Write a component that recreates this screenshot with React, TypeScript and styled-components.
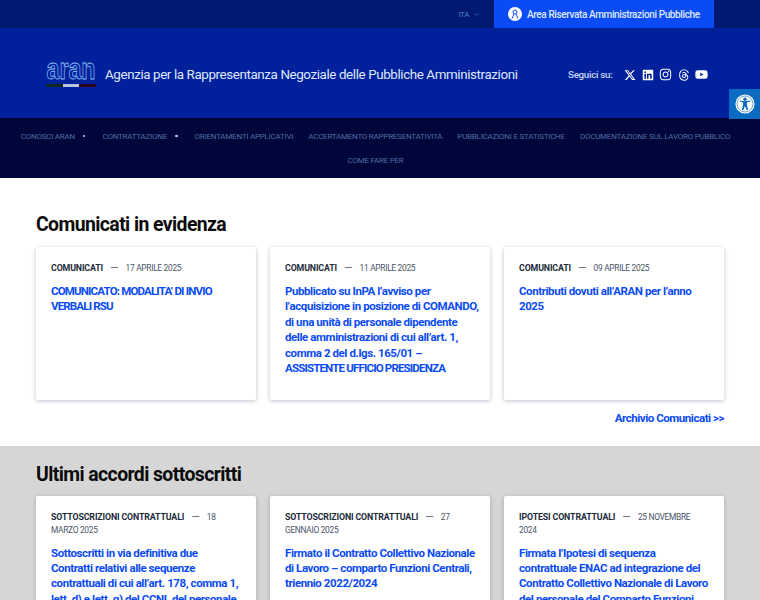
import React from "react";
import styled, { createGlobalStyle } from "styled-components";
import { FaXTwitter, FaLinkedin, FaInstagram, FaThreads, FaYoutube } from "react-icons/fa6";
import { ChevronDown } from "lucide-react";

const Global = createGlobalStyle`
  html, body { margin: 0; padding: 0; background: #fff; overflow: hidden; }
  body { font-family: "Roboto", "Liberation Sans", sans-serif; }
  * { box-sizing: border-box; }
`;
const Page = styled.div`width: 760px; height: 600px; overflow: hidden; position: relative;`;
const TopBar = styled.div`
  height: 28px; background: #001a72; display: flex; justify-content: flex-end; padding-right: 46px; align-items: stretch;
`;
const Lang = styled.div`
  display: flex; align-items: center; gap: 4px; margin-right: 14px; color: #4f7fc4; font-size: 8px; letter-spacing: -.4px;
`;
const Reserved = styled.div`
  width: 220px; background: #0a4bf5; color: #dfe8ff; display: flex; align-items: center; gap: 5px; padding-left: 14px; font-size: 10px; font-weight: 500; letter-spacing: -.38px; white-space: nowrap;
`;
const Header = styled.div`
  height: 90px; background: #00209c; display: flex; align-items: center; padding: 2px 52px 0 46px; color: #dfe8ff;
`;
const Logo = styled.div`display: flex; flex-direction: column; width: 50px; margin-right: 9px; flex: none;`;
const Tri = styled.div`display: flex; height: 3px; margin-top: 4px;`;
const TriPart = styled.span<{ $c: string }>`flex: 1; background: ${p => p.$c};`;
const Agency = styled.div`font-size: 13.4px; white-space: nowrap; letter-spacing: -.4px; flex: none;`;
const Social = styled.div`display: flex; align-items: center; color: #fff; gap: 5.5px; margin-left: auto; flex: none; padding-top: 1px;`;
const Follow = styled.span`font-size: 9.8px; margin-right: 6px; color: #c7d6f5; font-weight: 500; white-space: nowrap; letter-spacing: -.3px;`;
const Access = styled.div`
  position: absolute; top: 89px; right: 0; width: 31px; height: 30px; background: #0b6bc0; display: flex; align-items: center; justify-content: center;
`;
const Nav = styled.nav`
  height: 60px; background: #00053a; display: flex; flex-wrap: wrap; justify-content: center; align-content: flex-start; padding: 6px 9px 0 0; column-gap: 15px; color: #4f6da3; font-size: 8px; letter-spacing: -.24px;
`;
const NavItem = styled.span`height: 24px; display: flex; align-items: center; white-space: nowrap; gap: 8px;`;
const Dot = styled.i`width: 2.5px; height: 2.5px; border-radius: 50%; background: #c5d2ec; margin-right: 2px;`;
const Section = styled.section<{ $gray?: boolean }>`
  padding: ${p => (p.$gray ? "17px" : "35px")} 36px 0; background: ${p => (p.$gray ? "#d6d6d6" : "#fff")}; height: ${p => (p.$gray ? "auto" : "268px")};
`;
const Title = styled.h2`
  margin: 0; font-size: 19.4px; line-height: 24px; font-weight: 700; color: #0b0b0b; letter-spacing: -.58px;
`;
const Cards = styled.div<{ $gray?: boolean }>`
  display: grid; grid-template-columns: repeat(3, 220px); column-gap: 14px; margin-top: ${p => (p.$gray ? "9px" : "10px")};
`;
const Card = styled.article<{ $tall?: boolean }>`
  background: #fff; border-radius: 2px; box-shadow: 0 1px 4px rgba(40,50,90,.3); padding: 15px 15px 13px; height: ${p => (p.$tall ? "300px" : "153px")};
`;
const Meta = styled.div`font-size: 8.8px; line-height: 12.5px; color: #4a5568; letter-spacing: -.13px;`;
const Cat = styled.b`color: #1c2a3a; font-weight: 700;`;
const Dash = styled.span`margin: 0 7px; color: #667; letter-spacing: 0; font-size: 11px; line-height: 10px;`;
const When = styled.span`font-size: 8.4px; letter-spacing: -.3px;`;
const CardLink = styled.div`margin-top: 9.5px; color: #0a4bf5; font-size: 11.5px; line-height: 15.4px; font-weight: 700;`;
const Line = styled.span<{ $caps: boolean }>`display: block; white-space: nowrap; letter-spacing: ${p => (p.$caps ? "-.83px" : "-.42px")};`;
const MoreRow = styled.div`margin-top: 11px; text-align: right; color: #0a4bf5; font-size: 11.6px; font-weight: 700; letter-spacing: -.5px;`;

const first = [
  ["COMUNICATI", "17 APRILE 2025", "COMUNICATO: MODALITA’ DI INVIO|VERBALI RSU"],
  ["COMUNICATI", "11 APRILE 2025", "Pubblicato su InPA l’avviso per|l’acquisizione in posizione di COMANDO,|di una unità di personale dipendente|delle amministrazioni di cui all’art. 1,|comma 2 del d.lgs. 165/01 –|ASSISTENTE UFFICIO PRESIDENZA"],
  ["COMUNICATI", "09 APRILE 2025", "Contributi dovuti all’ARAN per l’anno|2025"],
];
const second = [
  ["SOTTOSCRIZIONI CONTRATTUALI", "18 MARZO 2025", "Sottoscritti in via definitiva due|Contratti relativi alle sequenze|contrattuali di cui all’art. 178, comma 1,|lett. d) e lett. g) del CCNL del personale"],
  ["SOTTOSCRIZIONI CONTRATTUALI", "27 GENNAIO 2025", "Firmato il Contratto Collettivo Nazionale|di Lavoro – comparto Funzioni Centrali,|triennio 2022/2024"],
  ["IPOTESI CONTRATTUALI", "25 NOVEMBRE 2024", "Firmata l’Ipotesi di sequenza|contrattuale ENAC ad integrazione del|Contratto Collettivo Nazionale di Lavoro|del personale del Comparto Funzioni"],
];

const lines = (t: string) =>
  t.split("|").map(l => <Line key={l} $caps={l === l.toUpperCase() && /[A-Z]{3}/.test(l)}>{l}</Line>);

export default function App() {
  return (
    <Page>
      <Global />
      <TopBar>
        <Lang>ITA <ChevronDown size={7} /></Lang>
        <Reserved>
          <svg width="14" height="14" viewBox="0 0 14 14">
            <circle cx="7" cy="7" r="7" fill="#fff" />
            <circle cx="7" cy="5" r="2" fill="none" stroke="#0a4bf5" strokeWidth="1" />
            <path d="M6 7 L4 11.5 M8 7 L10 11.5" stroke="#0a4bf5" strokeWidth="1" fill="none" />
          </svg>
          Area Riservata Amministrazioni Pubbliche
        </Reserved>
      </TopBar>
      <Header>
        <Logo>
          <svg width="50" height="18" viewBox="0 0 50 18">
            <text x="25" y="17" textAnchor="middle" fontFamily="Liberation Sans" fontWeight="700" fontSize="29" textLength="49" lengthAdjust="spacingAndGlyphs" fill="none" stroke="#8fc0f5" strokeWidth=".8">aran</text>
          </svg>
          <Tri><TriPart $c="#0e2a1e" /><TriPart $c="#b9c6e2" /><TriPart $c="#2e0420" /></Tri>
        </Logo>
        <Agency>Agenzia per la Rappresentanza Negoziale delle Pubbliche Amministrazioni</Agency>
        <Social>
          <Follow>Seguici su:</Follow>
          <FaXTwitter size={12} /><FaLinkedin size={12} /><FaInstagram size={13} /><FaThreads size={12} /><FaYoutube size={13} />
        </Social>
      </Header>
      <Access>
        <svg width="20" height="20" viewBox="0 0 20 20">
          <circle cx="10" cy="10" r="9.6" fill="#fff" />
          <circle cx="10" cy="10" r="8" fill="none" stroke="#0b6bc0" strokeWidth=".6" />
          <circle cx="10" cy="5.2" r="1.7" fill="#0b6bc0" />
          <path d="M4.5 7.4 L8 8.2 L8 11 L6.8 16 L8.4 16 L10 12 L11.6 16 L13.2 16 L12 11 L12 8.2 L15.5 7.4 L15 6.4 L10 7.3 L5 6.4 Z" fill="#0b6bc0" />
        </svg>
      </Access>
      <Nav>
        <NavItem>CONOSCI ARAN <Dot /></NavItem>
        <NavItem>CONTRATTAZIONE <Dot /></NavItem>
        <NavItem>ORIENTAMENTI APPLICATIVI</NavItem>
        <NavItem>ACCERTAMENTO RAPPRESENTATIVITÀ</NavItem>
        <NavItem>PUBBLICAZIONI E STATISTICHE</NavItem>
        <NavItem>DOCUMENTAZIONE SUL LAVORO PUBBLICO</NavItem>
        <NavItem>COME FARE PER</NavItem>
      </Nav>
      <Section>
        <Title>Comunicati in evidenza</Title>
        <Cards>
          {first.map(c => (
            <Card key={c[1]}>
              <Meta><Cat>{c[0]}</Cat><Dash>—</Dash><When>{c[1]}</When></Meta>
              <CardLink>{lines(c[2])}</CardLink>
            </Card>
          ))}
        </Cards>
        <MoreRow>Archivio Comunicati &gt;&gt;</MoreRow>
      </Section>
      <Section $gray>
        <Title>Ultimi accordi sottoscritti</Title>
        <Cards $gray>
          {second.map(c => (
            <Card key={c[1]} $tall>
              <Meta><Cat>{c[0]}</Cat><Dash>—</Dash><When>{c[1]}</When></Meta>
              <CardLink>{lines(c[2])}</CardLink>
            </Card>
          ))}
        </Cards>
      </Section>
    </Page>
  );
}
